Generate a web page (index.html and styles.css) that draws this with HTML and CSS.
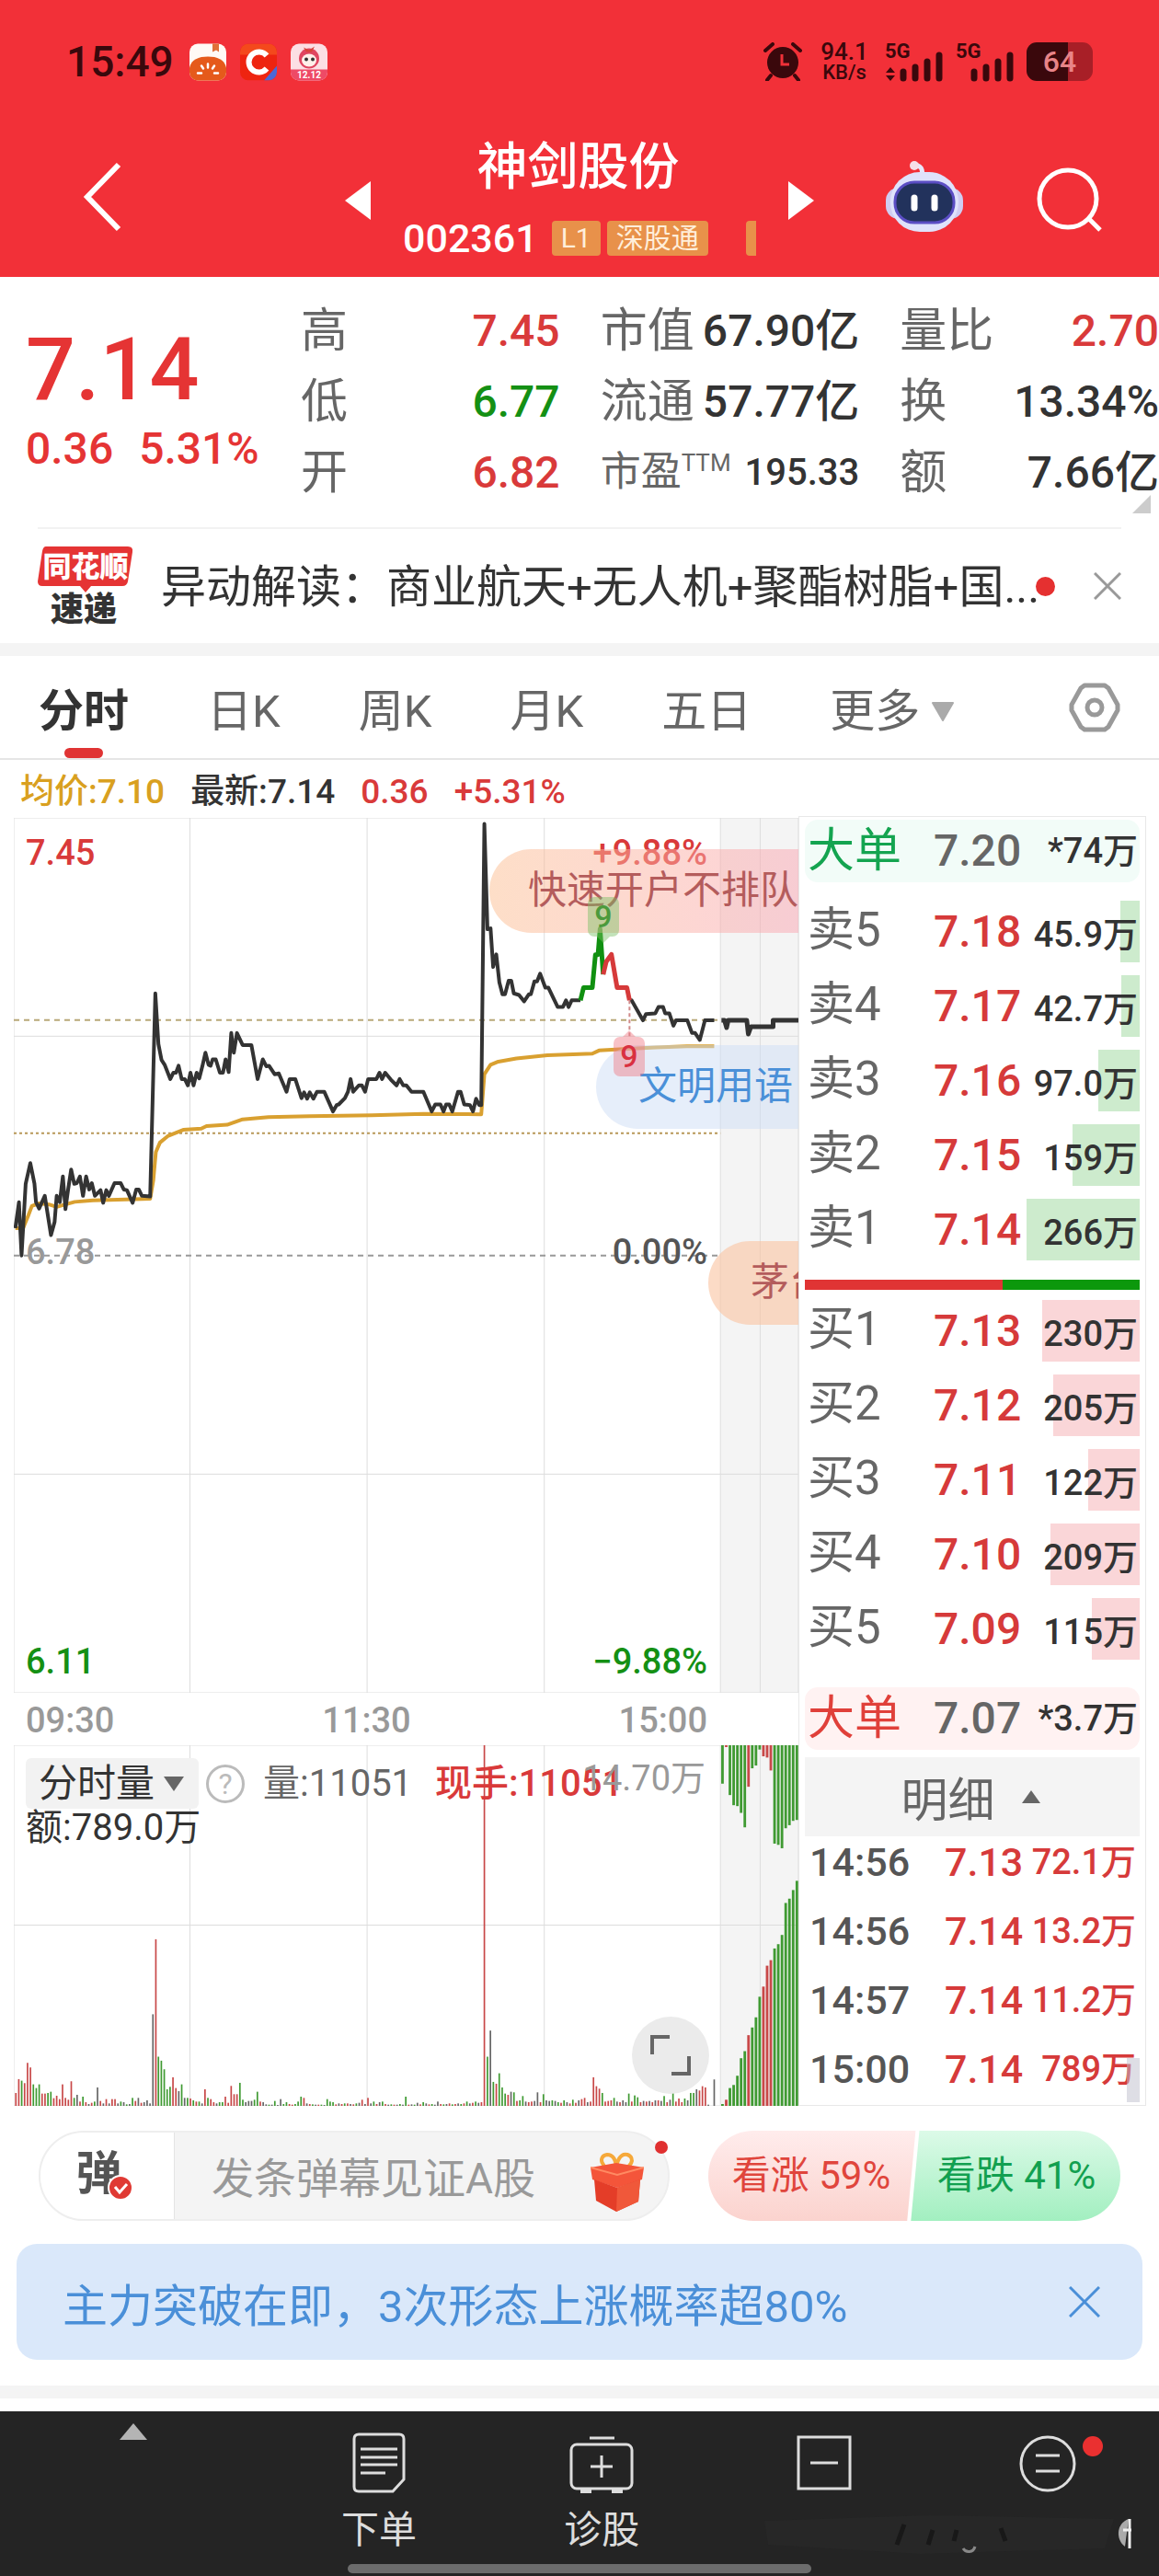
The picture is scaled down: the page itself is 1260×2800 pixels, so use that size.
FILE: index.html
```
<!DOCTYPE html>
<html lang="zh-CN">
<head>
  <meta charset="UTF-8" />
  <meta name="viewport" content="width=device-width, initial-scale=1.0"/>
  <title>神剑股份 002361</title>
  <link rel="stylesheet" href="styles.css">
</head>
<body>

  <header class="top">
    <!-- Status bar -->
    <div class="status">
      <span class="clock">15:49</span>
      <svg class="app-icon" viewBox="0 0 40 40">
        <rect width="40" height="40" rx="9" fill="#fffaf5"/>
        <path d="M0 26C2 17 10 14 20 14s18 3 20 12v5a9 9 0 0 1-9 9H9a9 9 0 0 1-9-9z" fill="#e55a1b"/>
        <path d="M25 0h7v9l-3-2-4 2z" fill="#e07038"/>
        <path d="M20 22v4M13 24l2 3M27 24l-2 3M9 32l4 0M31 32l-4 0" stroke="#fff" stroke-width="2.5" stroke-linecap="round"/>
      </svg>
      <svg class="app-icon" viewBox="0 0 40 40">
        <defs><clipPath id="appClip"><rect width="40" height="40" rx="9"/></clipPath></defs>
        <g clip-path="url(#appClip)">
          <rect width="40" height="40" fill="#ee2410"/>
          <path d="M0 0h40v12H0z" fill="#f4491c"/>
          <path d="M40 24v16H26z" fill="#4a68d8"/>
        </g>
        <path d="M29 13a11 11 0 1 0 0 14" fill="none" stroke="#fff" stroke-width="6"/>
      </svg>
      <svg class="app-icon" viewBox="0 0 40 40">
        <rect width="40" height="40" rx="9" fill="#fcdfe4"/>
        <path d="M0 28h40v3a9 9 0 0 1-9 9H9a9 9 0 0 1-9-9z" fill="#ee4a66"/>
        <circle cx="20" cy="16" r="11" fill="#e04560"/>
        <path d="M14 4l6 3 6-4-3 6h-6z" fill="#d8443a"/>
        <ellipse cx="20" cy="18" rx="8" ry="7" fill="#fff0ea"/>
        <circle cx="17" cy="17" r="2" fill="#333"/><circle cx="24" cy="17" r="2" fill="#333"/>
        <text x="20" y="37" class="app-date">12.12</text>
      </svg>

      <span class="grow"></span>

      <svg class="alarm" viewBox="0 0 42 42">
        <circle cx="21" cy="22" r="17" fill="#3a080c"/>
        <path d="M2 9l8-7M40 9l-8-7M8 36l-4 5M34 36l4 5" stroke="#3a080c" stroke-width="4" stroke-linecap="round"/>
        <path d="M20 13v11h8" fill="none" stroke="#f03038" stroke-width="3"/>
      </svg>
      <span class="speed"><b>94.1</b><small>KB/s</small></span>
      <svg class="signal" viewBox="0 0 66 42">
        <text x="0" y="17" class="sig-text">5G</text>
        <path d="M6 27l5 6H1zM6 42l5-6H1z" fill="#3a080c"/>
        <path d="M20 32v7M33 27v12M46 21v18M59 14v25" stroke="#3a080c" stroke-width="7" stroke-linecap="round"/>
      </svg>
      <svg class="signal" viewBox="0 0 66 42">
        <text x="0" y="17" class="sig-text">5G</text>
        <path d="M20 32v7M33 27v12M46 21v18M59 14v25" stroke="#3a080c" stroke-width="7" stroke-linecap="round"/>
      </svg>
      <span class="battery">64</span>
    </div>

    <!-- Title bar -->
    <div class="titlebar">
      <button class="icon-btn back" aria-label="返回">
        <svg width="44" height="76" viewBox="0 0 44 76"><path d="M39 3L5 38l34 35" fill="none" stroke="#fff" stroke-width="6"/></svg>
      </button>
      <button class="icon-btn prev" aria-label="上一只">
        <svg width="28" height="42" viewBox="0 0 28 42"><path d="M28 0v42L0 21z" fill="#fff"/></svg>
      </button>
      <div class="stock">
        <h1>神剑股份</h1>
        <div class="code">002361 <span class="tag">L1</span><span class="tag">深股通</span><span class="tag cut"></span></div>
      </div>
      <button class="icon-btn next" aria-label="下一只">
        <svg width="28" height="42" viewBox="0 0 28 42"><path d="M0 0v42l28-21z" fill="#fff"/></svg>
      </button>
      <button class="icon-btn robot" aria-label="智能助手">
        <svg width="84" height="80" viewBox="0 0 84 80">
          <path d="M40 16c-1-6 0-8-7-11" fill="none" stroke="#e8e6fa" stroke-width="5" stroke-linecap="round"/>
          <circle cx="31" cy="6" r="5" fill="#f6dfe8"/>
          <rect x="0" y="30" width="84" height="34" rx="14" fill="#cfcdf2"/>
          <rect x="5" y="13" width="74" height="65" rx="32" fill="#dfe2fb"/>
          <rect x="10" y="24" width="64" height="44" rx="21" fill="#22325c" stroke="#5b4ec4" stroke-width="3"/>
          <path d="M31 41v11M53 41v11" stroke="#fff" stroke-width="7" stroke-linecap="round"/>
        </svg>
      </button>
      <button class="icon-btn search" aria-label="搜索">
        <svg width="74" height="72" viewBox="0 0 74 72"><circle cx="35" cy="35" r="31" fill="none" stroke="#fff" stroke-width="5"/><path d="M57 56l13 13" stroke="#fff" stroke-width="5"/></svg>
      </button>
    </div>
  </header>

  <!-- Quote -->
  <section class="quote">
    <div class="price">
      <strong>7.14</strong>
      <div class="change"><span>0.36</span><span>5.31%</span></div>
    </div>
    <dl class="stats">
      <div><dt>高</dt><dd class="up">7.45</dd></div>
      <div><dt>市值</dt><dd>67.90亿</dd></div>
      <div><dt>量比</dt><dd class="up">2.70</dd></div>
      <div><dt>低</dt><dd class="down">6.77</dd></div>
      <div><dt>流通</dt><dd>57.77亿</dd></div>
      <div><dt>换</dt><dd>13.34%</dd></div>
      <div><dt>开</dt><dd class="up">6.82</dd></div>
      <div class="small"><dt>市盈<sup>TTM</sup></dt><dd>195.33</dd></div>
      <div><dt>额</dt><dd>7.66亿</dd></div>
    </dl>
    <svg class="corner" width="20" height="20" viewBox="0 0 20 20"><path d="M20 0v20H0z" fill="#ccc"/></svg>
  </section>

  <section class="news">
    <svg class="news-logo" width="104" height="86" viewBox="0 0 104 86">
      <path d="M9 0h89q6 0 5 6l-5 32q-1 5-6 5H58l-6 7-6-7H5q-5 0-5-5L5 5q1-5 4-5z" fill="#e53434"/>
      <text x="52" y="33" class="logo-a">同花顺</text>
      <text x="50" y="81" class="logo-b">速递</text>
    </svg>
    <a class="news-text" href="#">异动解读：商业航天+无人机+聚酯树脂+国...</a>
    <span class="dot"></span>
    <button class="icon-btn" aria-label="关闭">
      <svg width="30" height="30" viewBox="0 0 30 30"><path d="M1 1l28 28M29 1L1 29" stroke="#999" stroke-width="3"/></svg>
    </button>
  </section>

  <nav class="tabs">
    <button class="active">分时</button>
    <button>日K</button>
    <button>周K</button>
    <button>月K</button>
    <button>五日</button>
    <button>更多<svg width="26" height="22" viewBox="0 0 26 22"><path d="M2 1h22L13 20z" fill="#aaa" stroke="#aaa" stroke-width="2" stroke-linejoin="round"/></svg></button>
    <button class="setting" aria-label="设置">
      <svg width="56" height="54" viewBox="0 0 56 54" fill="none" stroke="#999" stroke-width="5"><path d="M17 3h22l4 3 10 18v6L43 48l-4 3H17l-4-3L3 30v-6L13 6z" stroke-linejoin="round"/><circle cx="28" cy="27" r="8"/></svg>
    </button>
  </nav>

  <main class="market">
    <div class="charts">
      <div class="legend"><span class="avg">均价:7.10</span><span>最新:7.14</span><span class="up">0.36</span><span class="up">+5.31%</span></div>

      <!-- Price chart -->
      <div class="plot price-plot">
        <svg viewBox="27 57 1519 2757" preserveAspectRatio="none">
          <rect x="1395" y="57" width="151" height="2757" fill="#f4f4f4"/>
          <path class="grid" d="M27 57H1546V2814H27zM368 57V2814M711 57V2814M1054 57V2814M1395 57V2814M1472 57V2814M27 745H1546M27 2125H1546"/>
          <path class="dash gold" d="M27 694H1395"/>
          <path class="dot-line" d="M27 1051H1395"/>
          <path class="dash" d="M27 1436H1395"/>
          <polyline class="line avg-line" points="30,1350 45,1350 55,1310 62,1280 75,1272 95,1275 110,1283 127,1275 145,1267 180,1262 291,1257 297,1200 302,1110 310,1080 325,1060 355,1040 390,1036 400,1028 440,1024 470,1007 520,1000 600,997 720,994 820,990 932,991 938,865 950,835 965,825 1000,815 1060,805 1147,800 1160,790 1200,786 1270,780 1330,777 1383,777"/>
          <polyline class="line" points="30,1350 37,1268 42,1436 50,1210 59,1145 67,1210 70,1268 76,1288 87,1248 99,1372 106,1330 110,1248 116,1268 122,1187 127,1290 132,1230 138,1165 144,1210 149,1208 155,1187 161,1248 167,1187 173,1228 178,1208 184,1248 195,1230 200,1270 206,1230 211,1248 222,1208 234,1208 240,1228 246,1230 257,1270 264,1228 269,1228 275,1248 291,1250 301,610 307,770 313,820 319,835 330,880 336,860 341,860 346,838 352,880 358,880 364,900 369,860 375,900 381,860 386,878 392,840 398,797 404,835 408,838 412,818 418,818 426,860 432,860 437,818 443,858 448,735 453,797 459,735 470,773 487,773 499,880 509,818 516,840 521,838 532,865 540,862 555,920 561,880 572,880 584,940 589,922 595,942 600,922 607,942 614,920 628,920 645,982 652,962 656,960 668,940 674,920 679,880 684,920 695,900 701,900 707,920 713,880 729,880 735,860 740,880 746,860 757,882 768,900 774,880 781,900 787,900 797,920 820,920 836,982 843,960 853,960 859,982 864,960 870,960 876,982 887,920 892,920 899,960 910,962 916,982 922,942 928,962 932,962 938,76 944,408 950,405 955,527 961,487 967,575 973,613 978,613 985,570 990,570 995,610 1005,615 1015,635 1024,613 1028,613 1035,572 1040,572 1046,548 1056,592 1062,592 1080,653 1090,653 1096,632 1101,653 1107,632 1124,632"/>
          <polyline class="line" points="1219,632 1223,632 1245,695 1251,675 1269,673 1275,653 1284,653 1288,673 1296,673 1304,712 1309,695 1331,695 1340,735 1346,735 1355,757 1365,695 1383,695"/>
          <polyline class="line after" points="1397,695 1403,695 1407,718 1410,695 1446,695 1449,738 1454,715 1497,715 1497,695 1546,695"/>
          <polyline class="line green" points="1124,632 1130,592 1147,592 1153,488 1158,488 1162,407 1168,550"/>
          <polyline class="line red" points="1168,550 1174,510 1184,487 1195,592 1214,592 1219,632"/>
          <path class="drop" d="M1219 632V745"/>
        </svg>
        <span class="lab tl up">7.45</span><span class="lab tr up">+9.88%</span>
        <span class="lab ml">6.78</span><span class="lab mr">0.00%</span>
        <span class="lab bl down">6.11</span><span class="lab br down">−9.88%</span>
        <span class="bullet b1">快速开户不排队</span>
        <span class="bullet b2">文明用语</span>
        <span class="bullet b3">茅台</span>
        <span class="nine sell">9</span>
        <span class="nine buy">9</span>
      </div>
      <div class="axis"><span>09:30</span><span>11:30</span><span>15:00</span></div>

      <!-- Volume chart -->
      <div class="plot vol-plot">
        <svg viewBox="27 350 1519 1173" preserveAspectRatio="none">
          <rect x="1395" y="350" width="151" height="1173" fill="#f4f4f4"/>
          <path class="grid" d="M27 350H1546V1523H27zM368 350V1523M711 350V1523M1054 350V1523M1395 350V1523M1472 350V1523M27 935H1546"/>
          <g id="volume"></g>
        </svg>
        <div class="vol-head">
          <div class="vol-row">
            <label class="vol-select">
              <select aria-label="指标"><option>分时量</option></select>
              <svg width="22" height="16" viewBox="0 0 22 16"><path d="M0 0h22L11 16z" fill="#666"/></svg>
            </label>
            <button class="help" aria-label="说明">?</button>
            <span class="gray">量:11051</span>
            <span class="up">现手:11051</span>
          </div>
          <div>额:789.0万</div>
        </div>
        <span class="vol-max">14.70万</span>
        <button class="expand" aria-label="全屏">
          <svg width="44" height="44" viewBox="0 0 44 44"><path d="M2 21V2h19M42 23v19H23" fill="none" stroke="#666" stroke-width="4"/></svg>
        </button>
      </div>
    </div>

    <!-- Order book -->
    <aside class="book">
      <div class="big sell-big"><span>大单</span><span>7.20</span><span>*74万</span></div>
      <table class="orders sells">
        <tr><th>卖5</th><td>7.18</td><td class="vol"><i style="width:16%"></i><span>45.9万</span></td></tr>
        <tr><th>卖4</th><td>7.17</td><td class="vol"><i style="width:15%"></i><span>42.7万</span></td></tr>
        <tr><th>卖3</th><td>7.16</td><td class="vol"><i style="width:34%"></i><span>97.0万</span></td></tr>
        <tr><th>卖2</th><td>7.15</td><td class="vol"><i style="width:56%"></i><span>159万</span></td></tr>
        <tr><th>卖1</th><td>7.14</td><td class="vol"><i style="width:94%"></i><span>266万</span></td></tr>
      </table>
      <div class="ratio"><i style="width:59%"></i></div>
      <table class="orders buys">
        <tr><th>买1</th><td>7.13</td><td class="vol"><i style="width:81%"></i><span>230万</span></td></tr>
        <tr><th>买2</th><td>7.12</td><td class="vol"><i style="width:72%"></i><span>205万</span></td></tr>
        <tr><th>买3</th><td>7.11</td><td class="vol"><i style="width:43%"></i><span>122万</span></td></tr>
        <tr><th>买4</th><td>7.10</td><td class="vol"><i style="width:74%"></i><span>209万</span></td></tr>
        <tr><th>买5</th><td>7.09</td><td class="vol"><i style="width:40%"></i><span>115万</span></td></tr>
      </table>
      <div class="big buy-big"><span>大单</span><span>7.07</span><span>*3.7万</span></div>
      <button class="detail-btn">明细<svg width="20" height="14" viewBox="0 0 20 14"><path d="M10 0l10 14H0z" fill="#666"/></svg></button>
      <table class="detail">
        <tr><th>14:56</th><td>7.13</td><td>72.1万</td></tr>
        <tr><th>14:56</th><td>7.14</td><td>13.2万</td></tr>
        <tr><th>14:57</th><td>7.14</td><td>11.2万</td></tr>
        <tr><th>15:00</th><td>7.14</td><td>789万</td></tr>
      </table>
      <span class="thumb"></span>
    </aside>
  </main>

  <!-- Comment bar and vote -->
  <section class="talk">
    <div class="talk-box">
      <button class="talk-toggle" aria-label="弹幕开关">弹
        <svg width="28" height="28" viewBox="0 0 28 28"><circle cx="14" cy="14" r="13" fill="#e03a34" stroke="#fff" stroke-width="2"/><path d="M8 13l5 6 8-9" fill="none" stroke="#fff" stroke-width="3"/></svg>
      </button>
      <input type="text" placeholder="发条弹幕见证A股" aria-label="发条弹幕">
      <svg class="gift" width="58" height="66" viewBox="0 0 58 66">
        <path d="M28 21C10 20 8 5 18 4c8 0 10 9 10 17C28 12 32 2 40 4c9 3 6 16-12 17z" fill="none" stroke="#f6a93a" stroke-width="4"/>
        <path d="M0 18l28-5 30 5-2 13-27 9L2 31z" fill="#f4553a"/>
        <path d="M4 31l25 9 25-9-2 24-24 11L6 54z" fill="#e43d28"/>
        <path d="M29 40l25-9-2 24-24 11z" fill="#f0583a"/>
        <path d="M0 18l29 8 29-8" fill="none" stroke="#ff8a62" stroke-width="2"/>
      </svg>
      <span class="talk-dot"></span>
    </div>
    <div class="vote">
      <button class="bull">看涨 59%</button>
      <button class="bear">看跌 41%</button>
    </div>
  </section>

  <section class="banner">
    <a href="#">主力突破在即，3次形态上涨概率超80%</a>
    <button class="icon-btn" aria-label="关闭">
      <svg width="34" height="34" viewBox="0 0 34 34"><path d="M1 1l32 32M33 1L1 33" stroke="#4a8fd8" stroke-width="3"/></svg>
    </button>
  </section>
  <div class="band"></div>

  <!-- Bottom bar -->
  <footer class="bottom">
    <nav class="menu">
      <a href="#" aria-label="展开" class="fold"><svg width="30" height="18" viewBox="0 0 30 18"><path d="M15 0l15 18H0z" fill="#b4b4b4"/></svg></a>
      <a href="#">
        <svg width="70" height="66" viewBox="0 0 70 66" fill="none" stroke="#ddd" stroke-width="3"><path d="M13 2h44q5 0 5 5v44L50 64H13q-5 0-5-5V7q0-5 5-5z"/><path d="M15 18h40M15 27h40M15 35h40M15 44h27"/></svg>
        下单
      </a>
      <a href="#">
        <svg width="70" height="66" viewBox="0 0 70 66" fill="none" stroke="#ddd" stroke-width="3"><rect x="2" y="13" width="66" height="48" rx="6"/><path d="M22 6h27M35 25v24M23 37h24"/><path d="M12 64h12M46 64h12" stroke-width="4"/></svg>
        诊股
      </a>
      <a href="#" aria-label="减仓">
        <svg width="70" height="66" viewBox="0 0 70 66" fill="none" stroke="#ddd" stroke-width="3"><rect x="6" y="5" width="56" height="56"/><path d="M19 33h30"/></svg>
      </a>
      <a href="#" aria-label="更多">
        <svg width="70" height="66" viewBox="0 0 70 66" fill="none" stroke="#ddd" stroke-width="3"><circle cx="35" cy="34" r="29"/><path d="M22 25h26M22 42h26"/></svg>
        <span class="menu-dot"></span>
      </a>
    </nav>
    <svg class="smudge" width="400" height="50" viewBox="0 0 400 50" fill="none">
      <path d="M0 12l180-6 200 4-10 32-200 6L4 38z" fill="#272727"/>
      <path d="M144 38l8-22M178 38l5-16M206 34l3-12M262 34l-5-14" stroke="#181818" stroke-width="5"/>
      <path d="M216 42c3 5 11 5 13-2" stroke="#888" stroke-width="3"/>
      <path d="M396 10c-14 5-14 23-4 30z" fill="#aaa"/>
      <path d="M397 10v32M390 22h9" stroke="#eee" stroke-width="3"/>
    </svg>
    <div class="home"></div>
  </footer>

  <script>
    // r = up, g = down, k = flat, number = bar height
    const volume = "r42 r87 g82 r74 r140 r125 g70 g58 g70 r40 r40 g42 g46 r25 r33 r22 r70 r26 r20 r80 g26 k36 r14 g30 r12 k6 r10 g14 k60 r16 k8 r22 k8 r22 r22 k8 g14 k12 g5 k6 g26 r16 k26 r10 k12 k18 k8 k298 r542 g160 g147 g119 g54 g62 r93 r58 k48 g70 k26 g26 r24 g18 r14 g14 k8 r54 g26 r22 r12 k8 g12 g12 r30 r10 r65 r38 r38 g75 g20 k12 k16 k16 g20 g46 r14 k12 k5 g4 k4 g16 k3 k22 g6 g12 r6 r4 g6 g14 g30 r26 k8 r6 g5 k4 r4 g4 k3 g22 g14 g12 r5 k8 r6 g8 r8 k6 r5 g8 k10 r20 k6 r26 k8 g14 r6 k12 g14 r6 k4 g5 r4 k4 g6 k4 g30 r4 k5 g4 k10 r5 g12 k8 r5 g6 k4 k14 r6 g5 k6 r8 g5 r6 k8 g6 r8 g14 k8 r10 g14 k10 r12 r1173 g160 k245 g78 r72 g106 g60 g40 r36 k46 g44 r16 g18 g32 k14 r12 r14 k16 k44 r12 g38 k18 k16 g18 k16 g12 r10 g18 k12 r8 g20 r10 k18 r22 r26 k12 r14 r93 r64 r56 g42 r14 r16 r18 g26 k14 r12 k18 k12 g40 r14 g34 g28 r12 k16 r14 k16 r12 k18 r18 k16 g32 r12 k20 g50 r14 r24 r12 g24 k18 g42 g42 k54 r50 r64 r60 k4 k0 k86";
    const afterTop = "g125 r6 g162 g195 g198 g220 g267 r135 g75 g66 g14 r36 r40 r82 g320 g324 g335 g270 g260 g246 g243";
    const afterBottom = "g6 r20 g58 g68 g98 g155 g178 r230 g255 g288 g355 r388 r456 r474 g512 g526 g556 g660 g674 g702 g732";
    const group = document.getElementById("volume");

    function drawBars(data, x0, x1, width, hang) {
      const bars = data.split(" ");
      const step = (x1 - x0) / (bars.length - 1);
      bars.forEach((bar, i) => {
        const h = Number(bar.slice(1));
        const rect = document.createElementNS("http://www.w3.org/2000/svg", "rect");
        rect.setAttribute("class", "bar-" + bar[0]);
        rect.setAttribute("x", x0 + i * step - width / 2);
        rect.setAttribute("y", hang ? 350 : 1523 - h);
        rect.setAttribute("width", width);
        rect.setAttribute("height", h);
        group.appendChild(rect);
      });
    }

    // the two sharp jumps sit at fixed minutes, so the session is drawn in three parts
    const all = volume.split(" ");
    const first = all.indexOf("r542");
    const second = all.indexOf("r1173");
    drawBars(all.slice(0, first + 1).join(" "), 31, 302, 3, false);
    drawBars(all.slice(first + 1, second + 1).join(" "), 307, 938, 3, false);
    drawBars(all.slice(second + 1).join(" "), 944, 1383, 3, false);
    drawBars(afterTop, 1399, 1543, 5, true);
    drawBars(afterBottom, 1399, 1543, 5, false);
  </script>

</body>
</html>
```
FILE: styles.css
```
* {
  box-sizing: border-box;
}

body {
  margin: 0;
  background: #fff;
  color: #333;
  font-family: Roboto, "Noto Sans CJK SC", sans-serif;
}

button, input, select {
  font: inherit;
  color: inherit;
  border: 0;
  padding: 0;
  background: none;
}

a {
  color: inherit;
  text-decoration: none;
}

svg {
  display: block;
}

.up { color: #d93a3a; }
.down { color: #149014; }
.gray { color: #666; }
.grow { flex: 1; }
.icon-btn { display: block; flex: none; }

/* header */
.top {
  background: #f23038;
  color: #fff;
}

.status {
  display: flex;
  align-items: center;
  gap: 15px;
  height: 134px;
  padding: 0 72px;
  color: #3a080c;
}

.clock {
  font-size: 46px;
  font-weight: 500;
  margin-right: 2px;
}

.app-icon { width: 40px; height: 41px; }
.app-date { font-size: 10px; font-weight: 700; fill: #fff; text-anchor: middle; }
.alarm { width: 42px; height: 42px; margin-right: 6px; }

.speed {
  display: flex;
  flex-direction: column;
  align-items: center;
  width: 50px;
  margin-right: 4px;
  font-weight: 500;
}

.speed b { font-size: 26px; line-height: 24px; font-weight: 500; }
.speed small { font-size: 22px; line-height: 22px; }
.signal { width: 66px; height: 42px; margin-right: -4px; overflow: visible; }
.sig-text { font-size: 22px; font-weight: 700; fill: #3a080c; }

.battery {
  width: 72px;
  height: 42px;
  border-radius: 11px;
  background: linear-gradient(90deg, #3a080c 62%, #a81f27 62%);
  color: #e88488;
  font-size: 32px;
  font-weight: 500;
  line-height: 42px;
  text-align: center;
}

.titlebar {
  display: flex;
  align-items: center;
  height: 167px;
  padding: 0 60px 8px 90px;
}

.back { margin-right: auto; }
.prev { margin-top: 8px; }
.next { margin-top: 8px; margin-right: 78px; }
.robot { margin-right: 79px; }
.search { margin-top: 6px; }

.stock {
  width: 454px;
  padding: 0 0 8px 35px;
}

.stock h1 {
  margin: 0 38px 9px 0;
  font-size: 55px;
  font-weight: 500;
  line-height: 90px;
  text-align: center;
}

.code {
  display: flex;
  align-items: center;
  gap: 7px;
  font-size: 43px;
  font-weight: 500;
  line-height: 48px;
}

.tag {
  height: 38px;
  padding: 0 10px;
  border-radius: 4px;
  background: #e8914a;
  color: #ffeeda;
  font-size: 30px;
  font-weight: 400;
  line-height: 38px;
}

.tag:first-child { margin-left: 8px; }
.cut { width: 11px; padding: 0; margin-left: 34px; border-radius: 4px 0 0 4px; }

/* quote */
.quote {
  position: relative;
  display: flex;
  height: 272px;
  padding: 20px 0 0 28px;
}

.price {
  width: 299px;
  color: #e53434;
}

.price strong {
  display: block;
  padding-top: 26px;
  font-size: 95px;
  font-weight: 500;
  line-height: 110px;
}

.change {
  display: flex;
  gap: 28px;
  font-size: 48px;
  font-weight: 500;
  line-height: 62px;
}

.stats {
  flex: 1;
  display: grid;
  grid-template-columns: repeat(3, 1fr);
  grid-auto-rows: 77px;
  column-gap: 44px;
  margin: 0;
}

.stats div {
  display: flex;
  justify-content: space-between;
  font-size: 51px;
  line-height: 77px;
  white-space: nowrap;
}

.stats dt { color: #666; }
.stats dd { margin: 0; font-size: 48px; font-weight: 500; }
.stats .small { font-size: 44px; }
.stats .small dd { font-size: 40px; }
.stats sup { font-size: 26px; line-height: 0; }

.corner {
  position: absolute;
  right: 9px;
  bottom: 15px;
}

.news {
  display: flex;
  align-items: center;
  height: 126px;
  margin: 0 41px;
  border-top: 2px solid #f2f2f2;
}

.news-logo { flex: none; overflow: visible; }
.logo-a { font-size: 31px; font-weight: 900; fill: #fff; text-anchor: middle; }
.logo-b { font-size: 36px; font-weight: 900; fill: #333; text-anchor: middle; }

.news-text {
  flex: 1;
  min-width: 0;
  padding: 4px 0 0 30px;
  font-size: 49px;
  line-height: 70px;
  white-space: nowrap;
}

.dot {
  flex: none;
  width: 21px;
  height: 21px;
  margin-right: 42px;
  border-radius: 50%;
  background: #e53030;
}

/* tabs */
.tabs {
  display: flex;
  align-items: center;
  gap: 85px;
  height: 127px;
  padding: 0 42px;
  border-top: 14px solid #f4f4f4;
  border-bottom: 2px solid #e6e6e6;
  color: #666;
  font-size: 49px;
}

.tabs button {
  position: relative;
  display: flex;
  align-items: center;
  gap: 12px;
  height: 100%;
  padding-top: 10px;
  line-height: 60px;
}

.tabs .active { color: #333; font-weight: 700; }

.tabs .active::after {
  content: "";
  position: absolute;
  left: 50%;
  bottom: 0;
  width: 42px;
  height: 11px;
  margin-left: -21px;
  border-radius: 6px;
  background: #e03434;
}

.tabs .setting { margin-left: auto; padding-top: 0; }

/* charts */
.market {
  display: grid;
  grid-template-columns: 868fr 378fr;
  padding-right: 14px;
}

.charts {
  min-width: 0;
  padding-left: 15px;
}

.legend {
  display: flex;
  gap: 28px;
  height: 63px;
  padding-left: 7px;
  font-size: 37px;
  font-weight: 500;
  line-height: 70px;
}

.avg { color: #d9a020; }

.plot {
  position: relative;
  overflow: hidden;
}

.plot > svg { width: 100%; height: 100%; }
.price-plot { height: 951px; }
.vol-plot { height: 392px; }

.grid, .line, .dash, .dot-line, .drop {
  fill: none;
  vector-effect: non-scaling-stroke;
}

.grid { stroke: #ddd; stroke-width: 1; }
.line { stroke: #333; stroke-width: 4; stroke-linejoin: round; }
.avg-line { stroke: #d9a030; }
.after { stroke-width: 5; }
.green { stroke: #109010; stroke-width: 5; }
.red { stroke: #d63a3a; stroke-width: 5; }
.dash { stroke: #999; stroke-width: 2; stroke-dasharray: 6 5; }
.gold { stroke: #b8a878; }
.dot-line { stroke: #b89858; stroke-width: 2; stroke-dasharray: 3 3; }
.drop { stroke: #d08a8a; stroke-width: 2; stroke-dasharray: 4 3; }

.bar-r { fill: #c84848; }
.bar-g { fill: #3f9a32; }
.bar-k { fill: #666; }

.lab {
  position: absolute;
  font-size: 38px;
  font-weight: 500;
  line-height: 44px;
}

.tl, .ml, .bl { left: 13px; }
.tr, .mr, .br { right: 99px; }
.tl, .tr { top: 16px; }
.ml, .mr { top: 450px; }
.bl, .br { bottom: 12px; }
.ml { color: #999; }
.mr { color: #555; }

.bullet {
  position: absolute;
  right: 0;
  height: 91px;
  border-radius: 46px 0 0 46px;
  font-size: 42px;
  line-height: 89px;
  white-space: nowrap;
  overflow: hidden;
}

.b1, .b3 {
  background: linear-gradient(90deg, rgba(252, 190, 145, .5), rgba(250, 165, 178, .5));
  color: #b45c5c;
}

.b1 { top: 34px; width: 336px; padding-left: 42px; }
.b2 { top: 247px; width: 220px; padding-left: 46px; background: rgba(206, 222, 246, .5); color: #4a90d8; }
.b3 { top: 460px; width: 98px; padding-left: 46px; background: rgba(250, 195, 160, .6); }

.nine {
  position: absolute;
  width: 34px;
  height: 43px;
  border-radius: 7px;
  font-size: 34px;
  font-weight: 500;
  line-height: 43px;
  text-align: center;
}

.nine::after {
  content: "";
  position: absolute;
  left: 10px;
  border: 7px solid transparent;
}

.sell { left: 624px; top: 86px; background: rgba(120, 190, 100, .45); color: #4c9a3c; }
.sell::after { top: 43px; border-top-color: rgba(120, 190, 100, .45); border-bottom: 0; }
.buy { left: 652px; top: 238px; background: rgba(240, 120, 130, .45); color: #d93040; }
.buy::after { bottom: 43px; border-bottom-color: rgba(240, 120, 130, .45); border-top: 0; }

.axis {
  display: flex;
  justify-content: space-between;
  height: 57px;
  padding: 0 99px 0 13px;
  color: #999;
  font-size: 38px;
  font-weight: 500;
  line-height: 60px;
}

.vol-head {
  position: absolute;
  left: 13px;
  top: 14px;
  font-size: 40px;
  line-height: 42px;
}

.vol-row {
  display: flex;
  align-items: center;
  height: 55px;
}

.vol-select {
  display: flex;
  align-items: center;
  width: 188px;
  height: 55px;
  margin-right: 8px;
  padding-left: 14px;
  border-radius: 6px;
  background: #f2f2f2;
}

.vol-select select {
  appearance: none;
  width: 136px;
  font-size: 42px;
  line-height: 55px;
}

.help {
  width: 42px;
  height: 42px;
  margin-right: 20px;
  border: 3px solid #bbb;
  border-radius: 50%;
  color: #bbb;
  font-size: 32px;
  line-height: 34px;
}

.vol-row .up { margin-left: 25px; font-weight: 500; }

.vol-max {
  position: absolute;
  right: 101px;
  top: 14px;
  color: #999;
  font-size: 38px;
  line-height: 44px;
}

.expand {
  position: absolute;
  right: 97px;
  bottom: 13px;
  display: grid;
  place-items: center;
  width: 84px;
  height: 84px;
  border-radius: 50%;
  background: #ebebeb;
}

/* order book */
.book {
  position: relative;
  margin-top: 61px;
  padding: 3px 6px 0;
  border: 1px solid #e8e8e8;
}

.book table {
  width: 100%;
  table-layout: fixed;
  border-spacing: 0;
}

.book th, .book td {
  padding: 0;
  white-space: nowrap;
}

.book th { text-align: left; font-weight: 400; }
.book th, .big span:first-child { width: 140px; padding-left: 3px; }

.big {
  display: flex;
  align-items: center;
  height: 68px;
  border-radius: 14px;
  font-size: 51px;
  line-height: 62px;
}

.big span:nth-child(2) { color: #666; font-size: 48px; font-weight: 500; }

.big span:last-child {
  margin-left: auto;
  padding-right: 2px;
  color: #333;
  font-size: 38px;
  font-weight: 500;
}

.sell-big { background: #f2fcf8; color: #14a450; }
.buy-big { margin-top: 23px; background: #fff2f2; color: #e0403a; }

.sells { margin-top: 13px; }
.buys { margin-top: 4px; }

.orders th, .orders td { height: 81px; }
.book .orders th { padding-bottom: 4px; color: #666; font-size: 51px; line-height: 66px; }
.orders td { width: 93px; color: #d63a3a; font-size: 48px; font-weight: 500; }

.orders .vol {
  position: relative;
  width: auto;
  padding-right: 2px;
  color: #333;
  font-size: 38px;
  text-align: right;
}

.vol i {
  position: absolute;
  right: 0;
  top: 7px;
  height: 67px;
  background: #cdebcd;
}

.buys .vol i { background: #fad6d8; }
.vol span { position: relative; }

.ratio {
  height: 11px;
  margin-top: 14px;
  background: #0c980c;
}

.ratio i { display: block; height: 100%; background: #e03434; }

.detail-btn {
  display: flex;
  align-items: center;
  justify-content: center;
  gap: 29px;
  width: 100%;
  height: 86px;
  margin-top: 8px;
  padding-right: 4px;
  background: #f4f4f4;
  color: #666;
  font-size: 51px;
}

.book .detail {
  margin: -19px 0;
  border-spacing: 0 19px;
}

.detail th, .detail td {
  height: 56px;
  color: #d63a3a;
  font-size: 43px;
  font-weight: 500;
  line-height: 54px;
}

.book .detail th { width: 152px; padding-left: 5px; color: #555; font-weight: 500; }
.detail td:nth-child(2) { width: 88px; }
.detail td:last-child { padding-right: 4px; font-size: 38px; text-align: right; }

.thumb {
  position: absolute;
  right: 6px;
  bottom: 3px;
  width: 14px;
  height: 48px;
  background: rgba(190, 190, 204, .5);
}

/* comment bar */
.talk {
  display: flex;
  gap: 42px;
  padding: 27px 42px 25px;
}

.talk-box {
  position: relative;
  flex: 1;
  min-width: 0;
  display: flex;
  align-items: center;
  height: 98px;
  border: 2px solid #eee;
  border-radius: 49px;
  background: #f4f4f4;
}

.talk-toggle {
  position: relative;
  flex: none;
  width: 146px;
  height: 100%;
  padding: 0 18px 4px 0;
  border-right: 1px solid #e4e4e4;
  border-radius: 47px 0 0 47px;
  background: #fff;
  color: #555;
  font-size: 50px;
  font-weight: 700;
  line-height: 84px;
}

.talk-toggle svg {
  position: absolute;
  left: 73px;
  top: 46px;
}

.talk-box input {
  flex: 1;
  min-width: 0;
  padding: 6px 0 0 40px;
  outline: 0;
  font-size: 46px;
}

.talk-box input::placeholder { color: #999; opacity: 1; }
.gift { flex: none; margin: 12px 26px 0 0; }

.talk-dot {
  position: absolute;
  right: 0;
  top: 9px;
  width: 14px;
  height: 14px;
  border-radius: 50%;
  background: #e03030;
}

.vote { display: flex; flex: none; }

.vote button {
  width: 230px;
  height: 98px;
  padding-bottom: 10px;
  font-size: 42px;
  white-space: nowrap;
}

.bull {
  margin-right: -12px;
  border-radius: 49px 0 0 49px;
  background: linear-gradient(#ffecec, #fbd3ce);
  clip-path: polygon(0 0, 98% 0, 94% 100%, 0 100%);
}

.vote .bull { color: #e0453c; padding-right: 6px; }

.bear {
  border-radius: 0 49px 49px 0;
  background: linear-gradient(#dcfae8, #a2efc0);
  clip-path: polygon(5% 0, 100% 0, 100% 100%, 1% 100%);
}

.vote .bear { color: #12a050; padding-left: 4px; }

.banner {
  display: flex;
  align-items: center;
  justify-content: space-between;
  height: 126px;
  margin: 0 18px 28px;
  padding: 0 46px 0 50px;
  border-radius: 22px;
  background: #dae8fa;
  color: #4a8fd8;
  font-size: 49px;
}

.band {
  height: 14px;
  margin-bottom: 14px;
  background: #f4f4f4;
}

/* bottom bar */
.bottom {
  position: relative;
  height: 179px;
  background: #242424;
  color: #ddd;
}

.menu {
  display: grid;
  grid-template-columns: 6fr 5fr 5fr 5fr 5fr;
  height: 166px;
}

.menu a {
  position: relative;
  display: flex;
  flex-direction: column;
  align-items: center;
  gap: 10px;
  padding-top: 23px;
  font-size: 41px;
  line-height: 60px;
}

.menu .fold { padding-top: 13px; }

.menu-dot {
  position: absolute;
  left: 50%;
  top: 27px;
  width: 22px;
  height: 22px;
  margin-left: 38px;
  border-radius: 50%;
  background: #ea3030;
}

.smudge {
  position: absolute;
  right: 29px;
  bottom: 22px;
}

.home {
  width: 40%;
  height: 10px;
  margin: 0 auto;
  border-radius: 5px;
  background: #6c6c6c;
}
```
